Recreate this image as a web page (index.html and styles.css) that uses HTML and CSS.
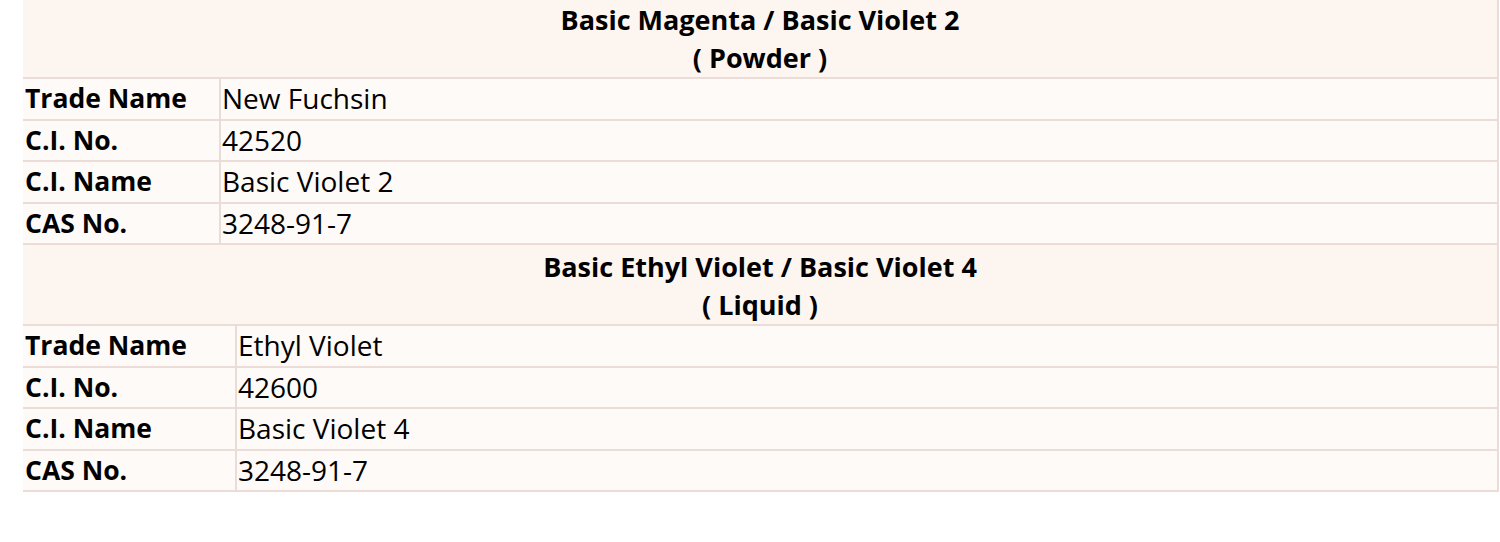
FILE: index.html
```html
<!DOCTYPE html>
<html>
<head>
<meta charset="utf-8">
<link rel="stylesheet" href="styles.css">
</head>
<body>
<div class="page">
  <table class="spec spec-a">
    <colgroup><col class="c-label"><col></colgroup>
    <tr class="head"><th colspan="2">Basic Magenta / Basic Violet 2<br>( Powder )</th></tr>
    <tr><td class="label">Trade Name</td><td class="val">New Fuchsin</td></tr>
    <tr><td class="label">C.I. No.</td><td class="val">42520</td></tr>
    <tr><td class="label">C.I. Name</td><td class="val">Basic Violet 2</td></tr>
    <tr><td class="label">CAS No.</td><td class="val">3248-91-7</td></tr>
  </table>
  <table class="spec spec-b">
    <colgroup><col class="c-label"><col></colgroup>
    <tr class="head"><th colspan="2">Basic Ethyl Violet / Basic Violet 4<br>( Liquid )</th></tr>
    <tr><td class="label">Trade Name</td><td class="val">Ethyl Violet</td></tr>
    <tr><td class="label">C.I. No.</td><td class="val">42600</td></tr>
    <tr><td class="label">C.I. Name</td><td class="val">Basic Violet 4</td></tr>
    <tr><td class="label">CAS No.</td><td class="val">3248-91-7</td></tr>
  </table>
</div>
</body>
</html>
```
FILE: styles.css
```css
html, body { margin: 0; padding: 0; background: #ffffff; }
.page {
  padding-left: 23px;
  width: 1476px;
  font-family: "Open Sans", sans-serif;
  color: #000;
}
.spec {
  width: 100%;
  border-collapse: collapse;
  table-layout: fixed;
}
.spec th, .spec td {
  border-bottom: 2px solid #ecdcd8;
  border-right: 2px solid #ecdcd8;
  padding: 0 0 0 1px;
  text-align: left;
  vertical-align: middle;
  white-space: nowrap;
  overflow: hidden;
}
.spec .head th {
  background: #fdf5f0;
  font-weight: bold;
  font-size: 27px;
  text-align: center;
  height: 77px;
  line-height: 38px;
  padding: 0;
}
.spec-b .head th { height: 77px; padding-top: 2px; }
.spec td {
  background: #fefaf7;
  height: 39.5px;
  line-height: 39px;
  font-size: 28px;
  padding-top: 0;
  padding-bottom: 0;
}
.spec .label { font-weight: bold; font-size: 26.5px; padding-left: 2px; }
.spec-a .c-label { width: 197px; }
.spec-b .c-label { width: 213px; }
```
